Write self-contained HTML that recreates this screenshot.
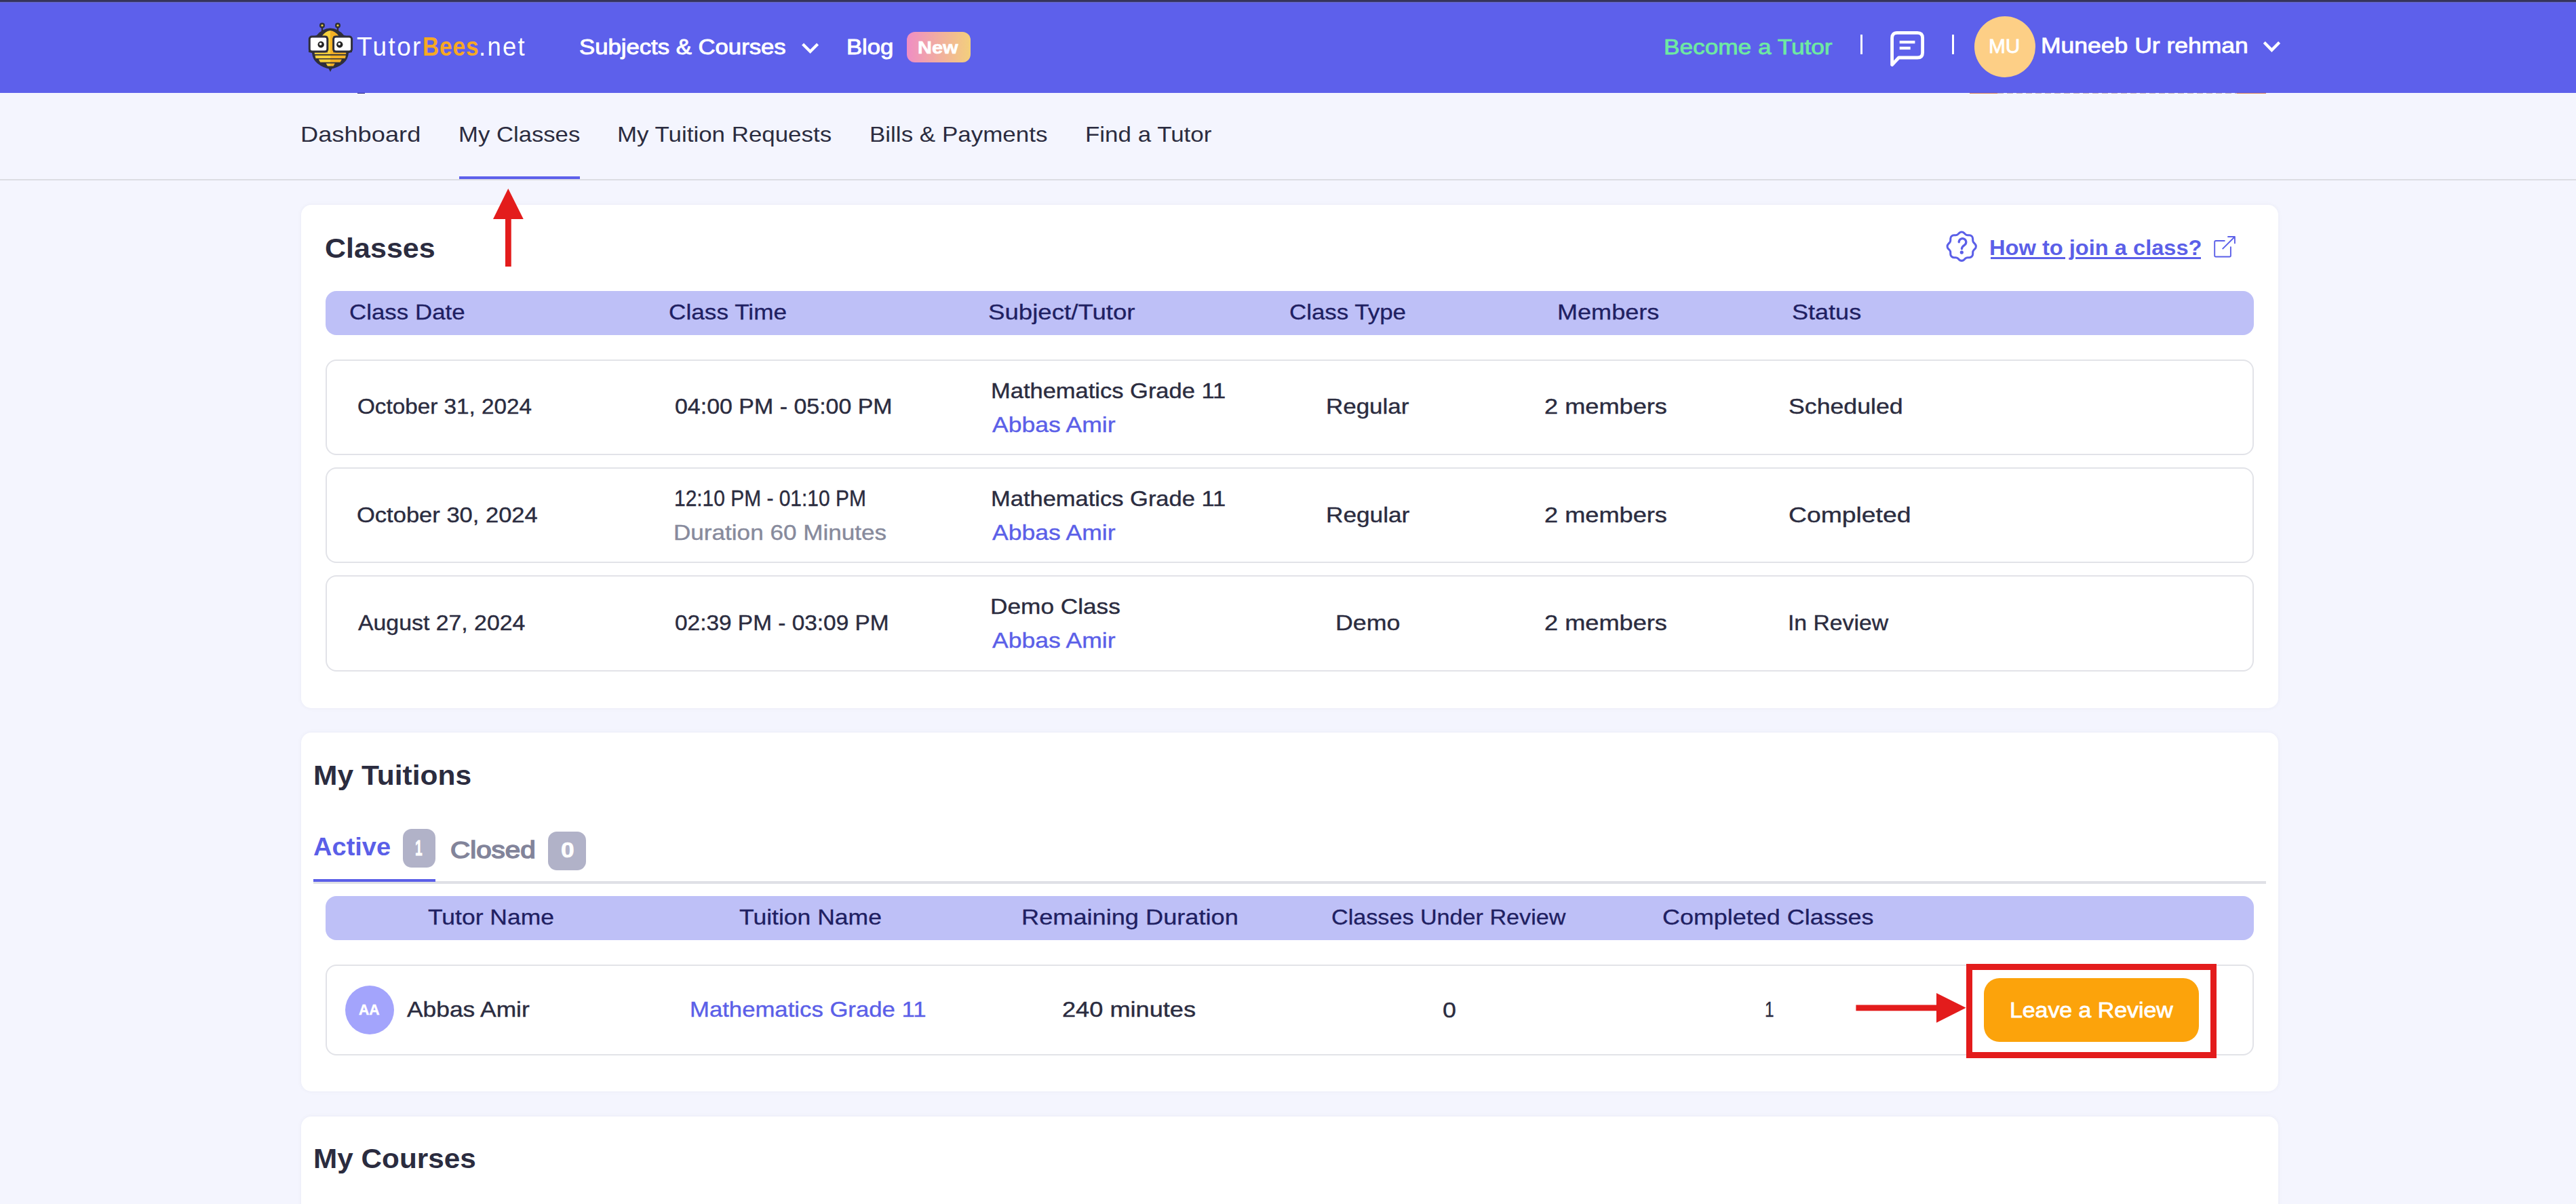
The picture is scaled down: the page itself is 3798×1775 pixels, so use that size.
<!DOCTYPE html>
<html><head><meta charset="utf-8"><title>My Classes - TutorBees</title>
<style>
html,body{margin:0;padding:0;width:3798px;height:1775px;overflow:hidden;background:#f4f5fe;}
body{position:relative;font-family:"Liberation Sans",sans-serif;}
.b{position:absolute;box-sizing:border-box;}
.t{position:absolute;white-space:nowrap;transform-origin:0 0;}
</style></head><body>
<div class=b style="left:0px;top:0px;width:3798px;height:2px;background:#35345a"></div>
<div class=b style="left:0px;top:2px;width:3798px;height:1px;background:#3a3a70"></div>
<div class=b style="left:0px;top:3px;width:3798px;height:134px;background:#5d60eb"></div>
<div class=b style="left:0px;top:3px;width:3798px;height:1px;background:#6a6bc6"></div>
<div class=b style="left:2904px;top:137px;width:41px;height:1px;background:#d27a55"></div>
<div class=b style="left:3298px;top:137px;width:43px;height:1px;background:#d27a55"></div>
<div class=b style="left:2945px;top:137px;width:353px;height:1px;background:repeating-linear-gradient(90deg,#9a7a8a 0 9px,transparent 9px 14px);opacity:.55"></div>
<div class=b style="left:527px;top:137px;width:11px;height:1px;background:#2e2a80"></div>
<div class=b style="left:1336.6px;top:47px;width:94.40000000000009px;height:45px;background:linear-gradient(90deg,#ef8dc4,#f3cf7c);border-radius:12px"></div>
<div class=b style="left:2743px;top:51px;width:3px;height:29px;background:#fff"></div>
<div class=b style="left:2878px;top:51px;width:3px;height:29px;background:#fff"></div>
<div class=b style="left:2911px;top:23.75px;width:90px;height:90.0px;background:#fdcf86;border-radius:50%"></div>
<div class=b style="left:0px;top:264px;width:3798px;height:2px;background:#dcdde3"></div>
<div class=b style="left:677px;top:259.5px;width:178px;height:4.5px;background:#5d60eb"></div>
<div class=b style="left:444px;top:302px;width:2915px;height:742px;background:#fff;border-radius:15px;box-shadow:0 0 6px rgba(40,40,80,.05)"></div>
<div class=b style="left:480px;top:428.75px;width:2843px;height:65.0px;background:#bec0f7;border-radius:16px"></div>
<div class=b style="left:480px;top:530px;width:2843px;height:141px;border:2px solid #e2e3e8;border-radius:16px;box-sizing:border-box"></div>
<div class=b style="left:480px;top:689px;width:2843px;height:141px;border:2px solid #e2e3e8;border-radius:16px;box-sizing:border-box"></div>
<div class=b style="left:480px;top:848px;width:2843px;height:142px;border:2px solid #e2e3e8;border-radius:16px;box-sizing:border-box"></div>
<div class=b style="left:2935px;top:379.2px;width:110px;height:2.5px;background:#5b5fe8"></div>
<div class=b style="left:3059.7px;top:379.2px;width:185.30000000000018px;height:2.5px;background:#5b5fe8"></div>
<div class=b style="left:444px;top:1079.5px;width:2915px;height:529.25px;background:#fff;border-radius:15px;box-shadow:0 0 6px rgba(40,40,80,.05)"></div>
<div class=b style="left:462px;top:1299px;width:2879px;height:4px;background:#dfe0e6"></div>
<div class=b style="left:462px;top:1295.75px;width:180px;height:4.25px;background:#5b5fe8"></div>
<div class=b style="left:593.75px;top:1222px;width:48.25px;height:56.75px;background:#b1b2c8;border-radius:13px"></div>
<div class=b style="left:808px;top:1226px;width:55.75px;height:56.5px;background:#b1b2c8;border-radius:13px"></div>
<div class=b style="left:480px;top:1321px;width:2843px;height:64.70000000000005px;background:#bec0f7;border-radius:16px"></div>
<div class=b style="left:480px;top:1421.5px;width:2843px;height:134.5px;border:2px solid #e2e3e8;border-radius:16px;box-sizing:border-box"></div>
<div class=b style="left:508.6px;top:1453px;width:72.0px;height:72px;background:#a3a4fc;border-radius:50%"></div>
<div class=b style="left:2898.6px;top:1420.6px;width:369.2000000000003px;height:139.20000000000005px;border:9px solid #e31c1c;box-sizing:border-box"></div>
<div class=b style="left:2924.8px;top:1441.5px;width:317.39999999999964px;height:94.5px;background:#fca30b;border-radius:23px"></div>
<div class=b style="left:444px;top:1646.25px;width:2915px;height:153.75px;background:#fff;border-radius:15px;box-shadow:0 0 6px rgba(40,40,80,.05)"></div>
<svg class=b style="left:1176px;top:56px" width="38" height="30" viewBox="0 0 38 30"><path d="M7.6 9.1 L18.6 20.1 L29.6 9.1" fill="none" stroke="#fff" stroke-width="4.2" stroke-linecap="butt" stroke-linejoin="miter"/></svg>
<svg class=b style="left:3331px;top:55px" width="38" height="30" viewBox="0 0 38 30"><path d="M7.3 7.6 L18.4 18.85 L29.6 7.6" fill="none" stroke="#fff" stroke-width="4.3" stroke-linecap="butt" stroke-linejoin="miter"/></svg>
<svg class=b style="left:2780px;top:40px" width="64" height="64" viewBox="0 0 64 64"><path d="M9.6 55.5 V16 Q9.6 8.3 17.3 8.3 H47 Q54.6 8.3 54.6 16 V37.4 Q54.6 45 47 45 H19.5 Z" fill="none" stroke="#fff" stroke-width="4.8" stroke-linejoin="round"/><rect x="20.7" y="20" width="22.7" height="4.2" fill="#fff"/><rect x="20.7" y="28.8" width="16" height="4.3" fill="#fff"/></svg>
<svg class=b style="left:2864.3px;top:335px" width="56.4" height="56.4" viewBox="0 0 24 24"><g fill="none" stroke="#5b5fe8" stroke-width="1.3" stroke-linecap="round" stroke-linejoin="round"><path d="M5 7.2a2.2 2.2 0 0 1 2.2 -2.2h1a2.2 2.2 0 0 0 1.55 -.64l.7 -.7a2.2 2.2 0 0 1 3.12 0l.7 .7c.412 .41 .97 .64 1.55 .64h1a2.2 2.2 0 0 1 2.2 2.2v1c0 .58 .23 1.138 .64 1.55l.7 .7a2.2 2.2 0 0 1 0 3.12l-.7 .7a2.2 2.2 0 0 0 -.64 1.55v1a2.2 2.2 0 0 1 -2.2 2.2h-1a2.2 2.2 0 0 0 -1.55 .64l-.7 .7a2.2 2.2 0 0 1 -3.12 0l-.7 -.7a2.2 2.2 0 0 0 -1.55 -.64h-1a2.2 2.2 0 0 1 -2.2 -2.2v-1a2.2 2.2 0 0 0 -.64 -1.55l-.7 -.7a2.2 2.2 0 0 1 0 -3.12l.7 -.7a2.2 2.2 0 0 0 .64 -1.55v-1"/><path d="M10.3 9.3 a2.25 2.25 0 1 1 3.45 1.95 c-.9 .6 -1.65 1.15 -1.65 2.3" stroke-width="1.4"/></g><circle cx="12.05" cy="15.8" r="1.12" fill="#5b5fe8"/></svg>
<svg class=b style="left:3256px;top:340px" width="48" height="48" viewBox="0 0 48 48"><g fill="none" stroke="#5b5fe8" stroke-width="1.9" stroke-linecap="butt" stroke-linejoin="round"><path d="M24.5 15 H11 Q9.2 15 9.2 16.8 V36.7 Q9.2 38.5 11 38.5 H31.1 Q32.9 38.5 32.9 36.7 V23.5"/><path d="M20.7 27.1 L38.9 9 M28.3 9 H38.9 V19.3"/></g></svg>
<svg class=b style="left:720px;top:270px" width="60" height="130" viewBox="0 0 60 130"><path d="M29.25 8 L51.75 53 H33.75 V123 H25 V53 H7 Z" fill="#e31c1c"/></svg>
<svg class=b style="left:2730px;top:1455px" width="175" height="60" viewBox="0 0 175 60"><path d="M6.4 26.6 H125 V9 L168.6 30.7 L125 52.8 V35.3 H6.4 Z" fill="#e31c1c"/></svg>
<svg class=b style="left:445px;top:28px" width="80" height="84" viewBox="0 0 80 84">
<defs><linearGradient id="yg" x1="0" x2="1" y1="0" y2="0"><stop offset="0.5" stop-color="#f6d23c"/><stop offset="0.5" stop-color="#f4b126"/></linearGradient></defs>
<g stroke="#2f2f3a" stroke-width="2.4" fill="none"><path d="M30 11 V22 M53 11 V22"/></g>
<circle cx="30" cy="9.4" r="4" fill="#2f2f3a"/><circle cx="53" cy="9.4" r="4" fill="#2f2f3a"/>
<circle cx="30" cy="9.4" r="1.5" fill="#f0d640"/><circle cx="53" cy="9.4" r="1.5" fill="#f0d640"/>
<path d="M22 24 Q30 14 42 13.5 Q54 14 62 24 L74 28 V49 L69 50 Q68 60 61 65.5 Q52 72.5 42 73.5 Q32 72.5 23 65.5 Q16 60 15 50 L10 49 V28 Z" fill="#2f2f3a"/>
<path d="M39 72 L45 72 L42 78 Z" fill="#2f2f3a"/>
<path d="M29.5 25.5 Q35 17.5 42 17 Q49 17.5 55 25.5 Z" fill="url(#yg)"/>
<rect x="38" y="24" width="8.4" height="26" fill="url(#yg)"/>
<rect x="18.8" y="49.3" width="46.4" height="2.6" fill="url(#yg)"/>
<path d="M19.5 53.7 H64.9 L64 57.9 H20.5 Z" fill="url(#yg)"/>
<path d="M24.8 59.6 H58.9 L56.5 63.8 H27.2 Z" fill="url(#yg)"/>
<path d="M35.6 65.6 H48.8 L46.5 69.4 H38 Z" fill="url(#yg)"/>
<rect x="11.3" y="26" width="26.5" height="22" rx="3.6" fill="#fff" stroke="#2f2f3a" stroke-width="3"/>
<rect x="46.6" y="26" width="27" height="22" rx="3.6" fill="#fff" stroke="#2f2f3a" stroke-width="3"/>
<circle cx="28.2" cy="37.7" r="4.7" fill="#222"/><circle cx="55.8" cy="37.7" r="4.7" fill="#222"/>
<circle cx="27.6" cy="36.8" r="1.9" fill="#fff"/><circle cx="55.2" cy="36.8" r="1.9" fill="#fff"/>
</svg>
<span class=t style="left:526.06px;top:49.98px;font-size:38.52px;line-height:38.52px;color:#ffffff;transform:scaleX(0.9589);letter-spacing:2.5px;">Tutor</span>
<span class=t style="left:622.99px;top:49.98px;font-size:38.52px;line-height:38.52px;font-weight:700;color:#f7a823;transform:scaleX(0.8700);letter-spacing:1px;">Bees</span>
<span class=t style="left:705.73px;top:49.98px;font-size:38.52px;line-height:38.52px;color:#ffffff;transform:scaleX(0.9435);letter-spacing:2.5px;">.net</span>
<span class=t style="left:853.72px;top:54.40px;font-size:30.52px;line-height:30.52px;color:#ffffff;transform:scaleX(1.1371);-webkit-text-stroke:0.9px #ffffff;">Subjects &amp; Courses</span>
<span class=t style="left:1248.04px;top:54.40px;font-size:30.52px;line-height:30.52px;color:#ffffff;transform:scaleX(1.1360);-webkit-text-stroke:0.9px #ffffff;">Blog</span>
<span class=t style="left:1353.10px;top:57.71px;font-size:25.73px;line-height:25.73px;font-weight:700;color:#ffffff;transform:scaleX(1.1267);-webkit-text-stroke:0.6px #ffffff;">New</span>
<span class=t style="left:2452.72px;top:53.53px;font-size:30.45px;line-height:30.45px;color:#6ee9a2;transform:scaleX(1.1569);-webkit-text-stroke:0.75px #6ee9a2;">Become a Tutor</span>
<span class=t style="left:2932.13px;top:53.75px;font-size:29.22px;line-height:29.22px;color:#ffffff;transform:scaleX(1.0194);-webkit-text-stroke:0.8px #ffffff;">MU</span>
<span class=t style="left:3008.62px;top:52.32px;font-size:30.67px;line-height:30.67px;color:#ffffff;transform:scaleX(1.1578);-webkit-text-stroke:0.8px #ffffff;">Muneeb Ur rehman</span>
<span class=t style="left:442.90px;top:182.99px;font-size:31.54px;line-height:31.54px;color:#2b2c3f;transform:scaleX(1.1493);">Dashboard</span>
<span class=t style="left:675.72px;top:182.99px;font-size:31.54px;line-height:31.54px;color:#2b2c3f;transform:scaleX(1.1002);">My Classes</span>
<span class=t style="left:909.71px;top:182.99px;font-size:31.54px;line-height:31.54px;color:#2b2c3f;transform:scaleX(1.1066);">My Tuition Requests</span>
<span class=t style="left:1281.70px;top:182.99px;font-size:31.54px;line-height:31.54px;color:#2b2c3f;transform:scaleX(1.1091);">Bills &amp; Payments</span>
<span class=t style="left:1599.71px;top:182.99px;font-size:31.54px;line-height:31.54px;color:#2b2c3f;transform:scaleX(1.1077);">Find a Tutor</span>
<span class=t style="left:479.28px;top:345.55px;font-size:40.55px;line-height:40.55px;font-weight:700;color:#2b2c3f;transform:scaleX(1.0617);">Classes</span>
<span class=t style="left:2933.04px;top:349.99px;font-size:31.54px;line-height:31.54px;font-weight:700;color:#5b5fe8;transform:scaleX(1.0344);">How to join a class?</span>
<span class=t style="left:514.92px;top:445.16px;font-size:31.40px;line-height:31.40px;color:#1f2062;transform:scaleX(1.1116);-webkit-text-stroke:0.3px #1f2062;">Class Date</span>
<span class=t style="left:985.91px;top:445.16px;font-size:31.40px;line-height:31.40px;color:#1f2062;transform:scaleX(1.1211);-webkit-text-stroke:0.3px #1f2062;">Class Time</span>
<span class=t style="left:1457.21px;top:445.16px;font-size:31.40px;line-height:31.40px;color:#1f2062;transform:scaleX(1.1673);-webkit-text-stroke:0.3px #1f2062;">Subject/Tutor</span>
<span class=t style="left:1900.92px;top:445.16px;font-size:31.40px;line-height:31.40px;color:#1f2062;transform:scaleX(1.1119);-webkit-text-stroke:0.3px #1f2062;">Class Type</span>
<span class=t style="left:2296.09px;top:445.16px;font-size:31.40px;line-height:31.40px;color:#1f2062;transform:scaleX(1.1489);-webkit-text-stroke:0.3px #1f2062;">Members</span>
<span class=t style="left:2642.23px;top:445.16px;font-size:31.40px;line-height:31.40px;color:#1f2062;transform:scaleX(1.1480);-webkit-text-stroke:0.3px #1f2062;">Status</span>
<span class=t style="left:526.88px;top:584.35px;font-size:31.10px;line-height:31.10px;color:#2b2c3f;transform:scaleX(1.0693);-webkit-text-stroke:0.4px #2b2c3f;">October 31, 2024</span>
<span class=t style="left:994.70px;top:584.35px;font-size:31.10px;line-height:31.10px;color:#2b2c3f;transform:scaleX(1.0913);-webkit-text-stroke:0.4px #2b2c3f;">04:00 PM - 05:00 PM</span>
<span class=t style="left:1461.26px;top:561.15px;font-size:31.10px;line-height:31.10px;color:#2b2c3f;transform:scaleX(1.1091);-webkit-text-stroke:0.4px #2b2c3f;">Mathematics Grade 11</span>
<span class=t style="left:1462.83px;top:610.95px;font-size:31.10px;line-height:31.10px;color:#5b5fe8;transform:scaleX(1.1421);-webkit-text-stroke:0.4px #5b5fe8;">Abbas Amir</span>
<span class=t style="left:1955.43px;top:584.35px;font-size:31.10px;line-height:31.10px;color:#2b2c3f;transform:scaleX(1.1228);-webkit-text-stroke:0.4px #2b2c3f;">Regular</span>
<span class=t style="left:2276.92px;top:584.35px;font-size:31.10px;line-height:31.10px;color:#2b2c3f;transform:scaleX(1.1630);-webkit-text-stroke:0.4px #2b2c3f;">2 members</span>
<span class=t style="left:2637.30px;top:584.35px;font-size:31.10px;line-height:31.10px;color:#2b2c3f;transform:scaleX(1.1474);-webkit-text-stroke:0.4px #2b2c3f;">Scheduled</span>
<span class=t style="left:526.34px;top:744.35px;font-size:31.10px;line-height:31.10px;color:#2b2c3f;transform:scaleX(1.1102);-webkit-text-stroke:0.4px #2b2c3f;">October 30, 2024</span>
<span class=t style="left:993.59px;top:719.02px;font-size:32.56px;line-height:32.56px;color:#2b2c3f;transform:scaleX(0.9196);-webkit-text-stroke:0.4px #2b2c3f;">12:10 PM - 01:10 PM</span>
<span class=t style="left:992.92px;top:769.95px;font-size:31.10px;line-height:31.10px;color:#878a9c;transform:scaleX(1.1288);-webkit-text-stroke:0.4px #878a9c;">Duration 60 Minutes</span>
<span class=t style="left:1461.26px;top:720.25px;font-size:31.10px;line-height:31.10px;color:#2b2c3f;transform:scaleX(1.1091);-webkit-text-stroke:0.4px #2b2c3f;">Mathematics Grade 11</span>
<span class=t style="left:1462.83px;top:769.95px;font-size:31.10px;line-height:31.10px;color:#5b5fe8;transform:scaleX(1.1421);-webkit-text-stroke:0.4px #5b5fe8;">Abbas Amir</span>
<span class=t style="left:1955.41px;top:744.35px;font-size:31.10px;line-height:31.10px;color:#2b2c3f;transform:scaleX(1.1322);-webkit-text-stroke:0.4px #2b2c3f;">Regular</span>
<span class=t style="left:2276.92px;top:744.35px;font-size:31.10px;line-height:31.10px;color:#2b2c3f;transform:scaleX(1.1630);-webkit-text-stroke:0.4px #2b2c3f;">2 members</span>
<span class=t style="left:2636.87px;top:744.35px;font-size:31.10px;line-height:31.10px;color:#2b2c3f;transform:scaleX(1.1999);-webkit-text-stroke:0.4px #2b2c3f;">Completed</span>
<span class=t style="left:527.72px;top:903.45px;font-size:31.10px;line-height:31.10px;color:#2b2c3f;transform:scaleX(1.0878);-webkit-text-stroke:0.4px #2b2c3f;">August 27, 2024</span>
<span class=t style="left:994.71px;top:903.45px;font-size:31.10px;line-height:31.10px;color:#2b2c3f;transform:scaleX(1.0742);-webkit-text-stroke:0.4px #2b2c3f;">02:39 PM - 03:09 PM</span>
<span class=t style="left:1459.91px;top:879.05px;font-size:31.10px;line-height:31.10px;color:#2b2c3f;transform:scaleX(1.1330);-webkit-text-stroke:0.4px #2b2c3f;">Demo Class</span>
<span class=t style="left:1462.83px;top:929.15px;font-size:31.10px;line-height:31.10px;color:#5b5fe8;transform:scaleX(1.1421);-webkit-text-stroke:0.4px #5b5fe8;">Abbas Amir</span>
<span class=t style="left:1968.87px;top:903.45px;font-size:31.10px;line-height:31.10px;color:#2b2c3f;transform:scaleX(1.1485);-webkit-text-stroke:0.4px #2b2c3f;">Demo</span>
<span class=t style="left:2276.92px;top:903.45px;font-size:31.10px;line-height:31.10px;color:#2b2c3f;transform:scaleX(1.1630);-webkit-text-stroke:0.4px #2b2c3f;">2 members</span>
<span class=t style="left:2635.68px;top:903.45px;font-size:31.10px;line-height:31.10px;color:#2b2c3f;transform:scaleX(1.0840);-webkit-text-stroke:0.4px #2b2c3f;">In Review</span>
<span class=t style="left:461.65px;top:1122.58px;font-size:40.41px;line-height:40.41px;font-weight:700;color:#2b2c3f;transform:scaleX(1.0529);">My Tuitions</span>
<span class=t style="left:462.04px;top:1231.25px;font-size:36.19px;line-height:36.19px;font-weight:700;color:#5b5fe8;transform:scaleX(1.0518);">Active</span>
<span class=t style="left:612.10px;top:1234.83px;font-size:31.25px;line-height:31.25px;font-weight:700;color:#ffffff;transform:scaleX(0.6134);-webkit-text-stroke:0.8px #ffffff;">1</span>
<span class=t style="left:664.37px;top:1236.12px;font-size:34.16px;line-height:34.16px;color:#82849a;transform:scaleX(1.1828);-webkit-text-stroke:1.5px #82849a;">Closed</span>
<span class=t style="left:826.97px;top:1238.24px;font-size:31.83px;line-height:31.83px;font-weight:700;color:#ffffff;transform:scaleX(1.1113);-webkit-text-stroke:0.6px #ffffff;">0</span>
<span class=t style="left:631.46px;top:1337.20px;font-size:31.10px;line-height:31.10px;color:#1f2062;transform:scaleX(1.1404);-webkit-text-stroke:0.3px #1f2062;">Tutor Name</span>
<span class=t style="left:1090.46px;top:1337.20px;font-size:31.10px;line-height:31.10px;color:#1f2062;transform:scaleX(1.1422);-webkit-text-stroke:0.3px #1f2062;">Tuition Name</span>
<span class=t style="left:1505.68px;top:1337.20px;font-size:31.10px;line-height:31.10px;color:#1f2062;transform:scaleX(1.1636);-webkit-text-stroke:0.3px #1f2062;">Remaining Duration</span>
<span class=t style="left:1962.56px;top:1337.20px;font-size:31.10px;line-height:31.10px;color:#1f2062;transform:scaleX(1.0982);-webkit-text-stroke:0.3px #1f2062;">Classes Under Review</span>
<span class=t style="left:2451.08px;top:1337.20px;font-size:31.10px;line-height:31.10px;color:#1f2062;transform:scaleX(1.1555);-webkit-text-stroke:0.3px #1f2062;">Completed Classes</span>
<span class=t style="left:529.32px;top:1478.01px;font-size:21.66px;line-height:21.66px;font-weight:700;color:#ffffff;transform:scaleX(0.9816);-webkit-text-stroke:0.5px #ffffff;">AA</span>
<span class=t style="left:600.03px;top:1473.25px;font-size:31.10px;line-height:31.10px;color:#2b2c3f;transform:scaleX(1.1365);-webkit-text-stroke:0.4px #2b2c3f;">Abbas Amir</span>
<span class=t style="left:1016.55px;top:1473.25px;font-size:31.10px;line-height:31.10px;color:#5b5fe8;transform:scaleX(1.1162);-webkit-text-stroke:0.4px #5b5fe8;">Mathematics Grade 11</span>
<span class=t style="left:1565.72px;top:1473.25px;font-size:31.10px;line-height:31.10px;color:#2b2c3f;transform:scaleX(1.1633);-webkit-text-stroke:0.4px #2b2c3f;">240 minutes</span>
<span class=t style="left:2127.35px;top:1472.82px;font-size:31.98px;line-height:31.98px;color:#2b2c3f;transform:scaleX(1.1202);-webkit-text-stroke:0.4px #2b2c3f;">0</span>
<span class=t style="left:2601.96px;top:1473.25px;font-size:31.10px;line-height:31.10px;color:#2b2c3f;transform:scaleX(0.7809);-webkit-text-stroke:0.4px #2b2c3f;">1</span>
<span class=t style="left:2962.53px;top:1473.52px;font-size:30.67px;line-height:30.67px;color:#ffffff;transform:scaleX(1.1033);-webkit-text-stroke:0.8px #ffffff;">Leave a Review</span>
<span class=t style="left:461.66px;top:1688.48px;font-size:40.41px;line-height:40.41px;font-weight:700;color:#2b2c3f;transform:scaleX(1.0473);">My Courses</span>
</body></html>
